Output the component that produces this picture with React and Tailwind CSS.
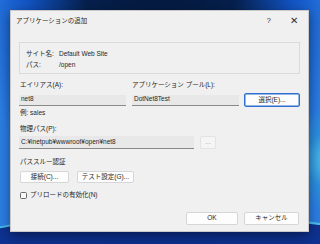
const font = { fontFamily: '"Liberation Sans", "Noto Sans CJK JP", sans-serif' };

function Field({ value, className }) {
  return (
    <div
      className={`flex items-center border-b border-[#8a8a8a] bg-[#e8e8e8] px-[2px] text-[#1f1f1f] ${className}`}
    >
      {value}
    </div>
  );
}

function Btn({ children, className = "", focus = false, disabled = false }) {
  const base = "flex items-center justify-center rounded-[2px] border";
  const tone = disabled
    ? "border-[#e3e3e3] bg-[#f5f5f5] text-[#a8a8a8]"
    : focus
    ? "border-[#2f6fd0] bg-[#fdfdfd] text-[#1f1f1f] shadow-[inset_0_0_0_0.5px_#2f6fd0]"
    : "border-[#d6d6d6] bg-[#fdfdfd] text-[#1f1f1f]";
  return <div className={`${base} ${tone} ${className}`}>{children}</div>;
}

export default function App() {
  return (
    <div
      className="relative h-[244px] w-[320px] overflow-hidden bg-[radial-gradient(ellipse_at_50%_-20%,#04183a_0%,#06204d_35%,#1254c4_60%,#2b7fe6_80%)]"
      style={font}
    >
      <div className="pointer-events-none absolute bottom-[-30px] left-[-40px] h-[60px] w-[420px] rounded-[50%] border-t-[3px] border-[#4fc9f0] bg-[#0b2a8a] opacity-90" />
      <div className="pointer-events-none absolute right-[-60px] top-[100px] h-[120px] w-[90px] rounded-[50%] bg-[radial-gradient(circle,#5fd6f2_0%,#2a8fe0_40%,transparent_70%)]" />

      <div className="relative ml-[10px] mt-[10px] flex h-[222px] w-[299px] flex-col border border-[#c9c9c9] bg-[#f0f0f0] text-[6.5px] leading-none text-[#1f1f1f] shadow-[0_4px_12px_rgba(0,0,0,0.45)]">
        <div className="flex h-[20px] items-center justify-between pl-[5px] pr-[10px]">
          <span>アプリケーションの追加</span>
          <div className="flex items-center gap-[19px] text-[8px] text-[#333]">
            <span>?</span>
            <span className="text-[10px] font-light">✕</span>
          </div>
        </div>

        <div className="flex flex-col px-[8px]">
          <div className="mt-[11px] flex h-[32px] flex-col gap-[4px] border border-[#dadada] pl-[6px] pt-[8px]">
            <div className="flex">
              <span className="w-[33px]">サイト名:</span>
              <span>Default Web Site</span>
            </div>
            <div className="flex">
              <span className="w-[33px]">パス:</span>
              <span>/open</span>
            </div>
          </div>

          <div className="mt-[8px] flex">
            <div className="flex w-[113px] flex-col pl-[1px]">
              <span className="h-[8px]">エイリアス(A):</span>
            </div>
            <span className="h-[8px]">アプリケーション プール(L):</span>
          </div>

          <div className="mt-[3px] flex h-[14px] items-center">
            <Field value="net8" className="h-[11px] w-[107px]" />
            <Field value="DotNet8Test" className="ml-[6px] h-[11px] w-[107px]" />
            <Btn focus className="ml-[5px] h-[14px] w-[56px]">
              選択(E)...
            </Btn>
          </div>

          <span className="mt-[3px] h-[8px] pl-[1px]">例: sales</span>

          <span className="mt-[8px] h-[8px] pl-[1px]">物理パス(P):</span>
          <div className="mt-[2px] flex items-center">
            <Field value="C:¥inetpub¥wwwroot¥open¥net8" className="h-[13px] w-[175px]" />
            <Btn disabled className="ml-[6px] h-[13px] w-[16px]">
              ...
            </Btn>
          </div>

          <span className="mt-[10px] h-[8px] pl-[1px]">パススルー認証</span>
          <div className="mt-[4px] flex gap-[8px] pl-[1px]">
            <Btn className="h-[12px] w-[49px]">接続(C)...</Btn>
            <Btn className="h-[12px] w-[57px]">テスト設定(G)...</Btn>
          </div>

          <div className="mt-[9px] flex items-center gap-[3px] pl-[1px]">
            <div className="h-[7px] w-[7px] rounded-[1.5px] border border-[#6a6a6a] bg-[#f7f7f7]" />
            <span>プリロードの有効化(N)</span>
          </div>

          <div className="mt-[13px] flex justify-end gap-[6px] pr-[1px]">
            <Btn className="h-[13px] w-[52px]">OK</Btn>
            <Btn className="h-[13px] w-[55px]">キャンセル</Btn>
          </div>
        </div>
      </div>
    </div>
  );
}
